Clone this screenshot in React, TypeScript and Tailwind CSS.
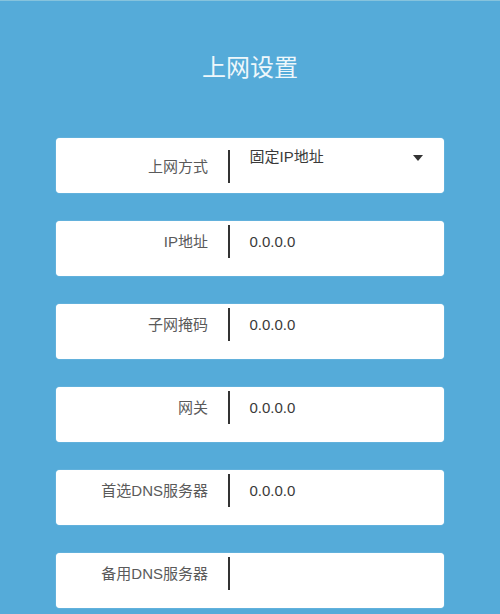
const fields: { label: string; value: string; select?: boolean }[] = [
  { label: '上网方式', value: '固定IP地址', select: true },
  { label: 'IP地址', value: '0.0.0.0' },
  { label: '子网掩码', value: '0.0.0.0' },
  { label: '网关', value: '0.0.0.0' },
  { label: '首选DNS服务器', value: '0.0.0.0' },
  { label: '备用DNS服务器', value: '' },
];

const font = "font-['Liberation_Sans','Noto_Sans_CJK_SC',sans-serif]";

export default function App() {
  return (
    <div className={`min-h-[614px] bg-[#55abd9] border-t border-[#86c3dd] ${font}`}>
      <h1 className="pt-[51px] text-center text-[24px] leading-[32px] font-normal text-[#eef7fb]">
        上网设置
      </h1>
      <div className="mt-[54px] mx-[56px] flex flex-col gap-[28px]">
        {fields.map((f, i) => (
          <div
            key={f.label}
            className="h-[55px] rounded-[4px] bg-white flex items-start pt-[4px] relative shadow-[0_0_1px_rgba(255,255,255,0.8)]"
          >
            <div className={`flex items-center h-[33px] ${i === 0 ? 'mt-[8px]' : ''}`}>
              <span className="w-[152px] text-right text-[15px] leading-[20px] text-[#5a5a5a]">
                {f.label}
              </span>
              <span className="ml-[20px] w-[1.5px] h-[33px] bg-[#333]" />
            </div>
            <div className={`flex items-center h-[33px] ml-[20px] ${i === 0 ? '-mt-[2px]' : ''}`}>
              <span className="text-[15px] leading-[20px] text-[#3a3a3a]">{f.value}</span>
            </div>
            {f.select && (
              <svg
                className="absolute right-[21px] top-[17px]"
                width="10"
                height="6"
                viewBox="0 0 10 6"
              >
                <path d="M0 0h10L5 6z" fill="#333" />
              </svg>
            )}
          </div>
        ))}
      </div>
    </div>
  );
}
